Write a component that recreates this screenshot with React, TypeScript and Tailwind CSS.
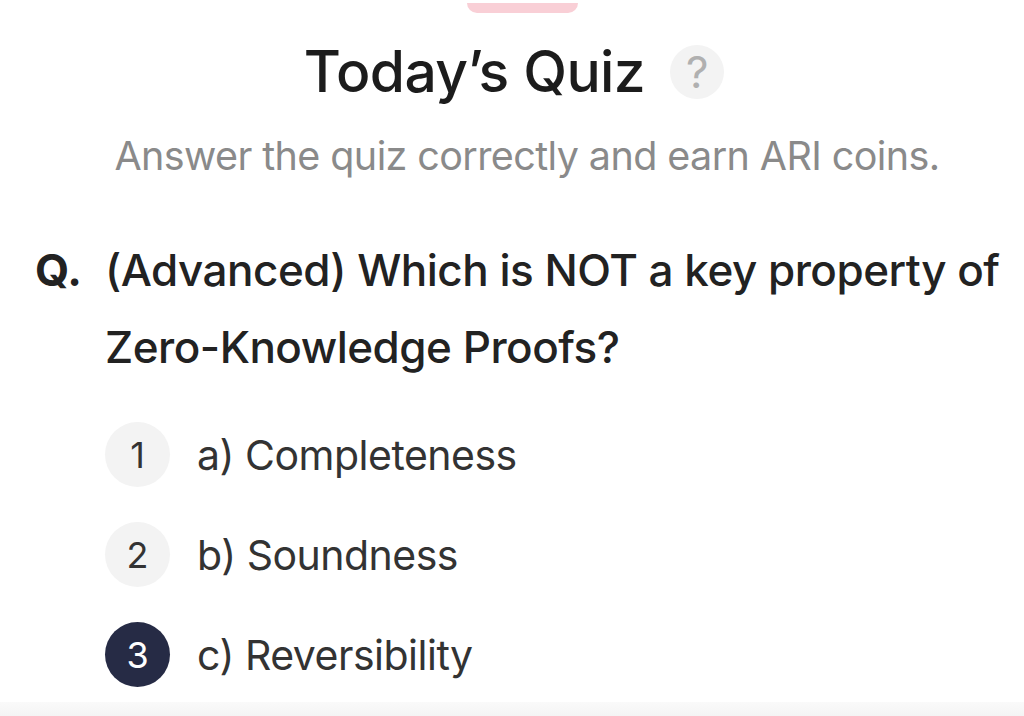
import React from 'react';

const options = [
  { n: 1, label: 'a) Completeness', selected: false },
  { n: 2, label: 'b) Soundness', selected: false },
  { n: 3, label: 'c) Reversibility', selected: true },
];

export default function App() {
  return (
    <div
      className="w-[1024px] h-[716px] bg-white flex flex-col overflow-hidden"
      style={{ fontFamily: 'Inter, "Noto Sans", sans-serif' }}
    >
      <div className="ml-[467px] mt-[3px] h-[10px] w-[111px] rounded-b-[60px] bg-[#f9cfd6]" />

      <div className="mt-[27px] flex items-center justify-center gap-[25px] pl-[4px]">
        <h1 className="text-[57px] leading-[64px] font-medium text-[#1c1c1c] tracking-[-0.6px]">Today’s Quiz</h1>
        <div className="w-[54px] h-[54px] rounded-full bg-[#f3f3f3] flex items-center justify-center text-[44px] leading-none text-[#b0b0b0]">
          ?
        </div>
      </div>

      <p className="mt-[28px] pl-[30px] text-center text-[39.5px] leading-[48px] text-[#8a8a8a] tracking-[-0.6px]">
        Answer the quiz correctly and earn ARI coins.
      </p>

      <div className="mt-[52px] flex pl-[35px] pr-[20px]">
        <span className="w-[70px] shrink-0 text-[44px] leading-[77px] font-bold text-[#222]">Q.</span>
        <p className="text-[44px] leading-[77px] font-medium text-[#222] tracking-[-0.5px]">
          (Advanced) Which is NOT a key property of Zero-Knowledge Proofs?
        </p>
      </div>

      <div className="mt-[36px] flex flex-col gap-[35px] pl-[105px]">
        {options.map((o) => (
          <div key={o.n} className="flex items-center gap-[27px]">
            <div
              className={
                o.selected
                  ? 'w-[65px] h-[65px] rounded-full bg-[#262b45] text-white flex items-center justify-center text-[36px]'
                  : 'w-[65px] h-[65px] rounded-full bg-[#f3f3f3] text-[#333] flex items-center justify-center text-[36px]'
              }
            >
              {o.n}
            </div>
            <span className="text-[41px] leading-[48px] text-[#333] tracking-[-0.5px]">{o.label}</span>
          </div>
        ))}
      </div>

      <div className="mt-auto h-[14px] bg-gradient-to-b from-[#fafafa] to-[#f4f4f4]" />
    </div>
  );
}
